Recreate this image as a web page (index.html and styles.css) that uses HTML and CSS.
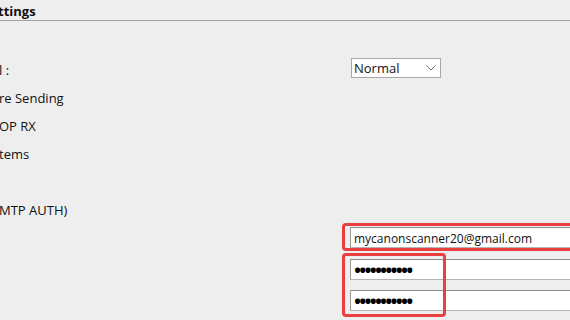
FILE: index.html
```html
<!DOCTYPE html>
<html>
<head>
<meta charset="utf-8">
<link rel="stylesheet" href="styles.css">
</head>
<body>
<div class="panel">
  <div class="heading"><span class="heading-text">ttings</span></div>
  <div class="rows">
    <div class="row row-first">
      <span class="label">l :</span>
      <div class="ctl">
        <div class="select"><span class="select-value">Normal</span><svg class="chev" width="10" height="6" viewBox="0 0 10 6"><path d="M0.5 0.5 L5 5 L9.5 0.5" fill="none" stroke="#707070" stroke-width="1"/></svg></div>
      </div>
    </div>
    <div class="row"><span class="label">re Sending</span></div>
    <div class="row"><span class="label">OP RX</span></div>
    <div class="row"><span class="label">tems</span></div>
    <div class="row"><span class="label"></span></div>
    <div class="row"><span class="label">MTP AUTH)</span></div>
    <div class="fields">
      <div class="field field-email">
        <input class="text-input" type="text" value="mycanonscanner20@gmail.com">
        <div class="mark mark-email"></div>
      </div>
      <div class="pw-group">
        <input class="text-input pw" type="password" value="xxxxxxxxxxx">
        <input class="text-input pw" type="password" value="xxxxxxxxxxx">
        <div class="mark mark-pw"></div>
      </div>
    </div>
  </div>
</div>
</body>
</html>
```

FILE: styles.css
```css
html, body {
  margin: 0;
  padding: 0;
  background: #eeeeee;
  width: 570px;
  height: 320px;
  overflow: hidden;
}
body {
  font-family: "Open Sans", "Noto Sans", sans-serif;
  font-size: 13px;
  color: #111111;
}
.panel {
  width: 570px;
}
.heading {
  height: 20px;
  border-bottom: 1px solid #a3a3a3;
  margin-left: -2px;
  overflow: hidden;
}
.heading-text {
  display: block;
  font-weight: 700;
  font-size: 13px;
  line-height: 20px;
  margin-top: 1px;
}
.rows {
  padding-top: 34px;
}
.row {
  height: 28px;
  display: grid;
  grid-template-columns: 351px 1fr;
  align-items: center;
}
.label {
  display: block;
  margin-left: -1px;
  line-height: 18px;
  padding-top: 2px;
}
.ctl {
  display: flex;
  align-items: center;
  margin-top: -3px;
}
.select {
  width: 90px;
  height: 20px;
  box-sizing: border-box;
  border: 1px solid #a6a6a6;
  background: #ffffff;
  display: flex;
  align-items: center;
  justify-content: space-between;
  padding: 0 4px 0 2px;
  font-size: 13px;
  color: #111111;
}
.select-value {
  line-height: 18px;
}
.chev {
  display: block;
  margin-top: 1px;
}
.fields {
  padding-left: 350px;
  padding-top: 4px;
}
.field, .pw-group {
  position: relative;
}
.text-input {
  display: block;
  width: 260px;
  height: 21px;
  box-sizing: border-box;
  margin: 0;
  border: 1px solid #b4b4b4;
  border-top-color: #8f8f8f;
  border-left-color: #9a9a9a;
  background: #ffffff;
  padding: 1px 3px 0;
  font-family: "Open Sans", "Noto Sans", sans-serif;
  font-size: 12px;
  color: #111111;
  outline: none;
}
.pw-group {
  margin-top: 11px;
  display: flex;
  flex-direction: column;
  gap: 10px;
}
.pw {
  font-size: 24px;
  letter-spacing: -3.8px;
  padding: 0 2px;
  line-height: 19px;
  color: #000000;
}
.mark {
  position: absolute;
  border: 3px solid #e8403e;
  border-radius: 4px;
  pointer-events: none;
}
.mark-email {
  left: -8px;
  top: -4px;
  right: -40px;
  bottom: -3px;
}
.mark-pw {
  left: -8px;
  top: -6px;
  width: 98px;
  bottom: -6px;
}
```
